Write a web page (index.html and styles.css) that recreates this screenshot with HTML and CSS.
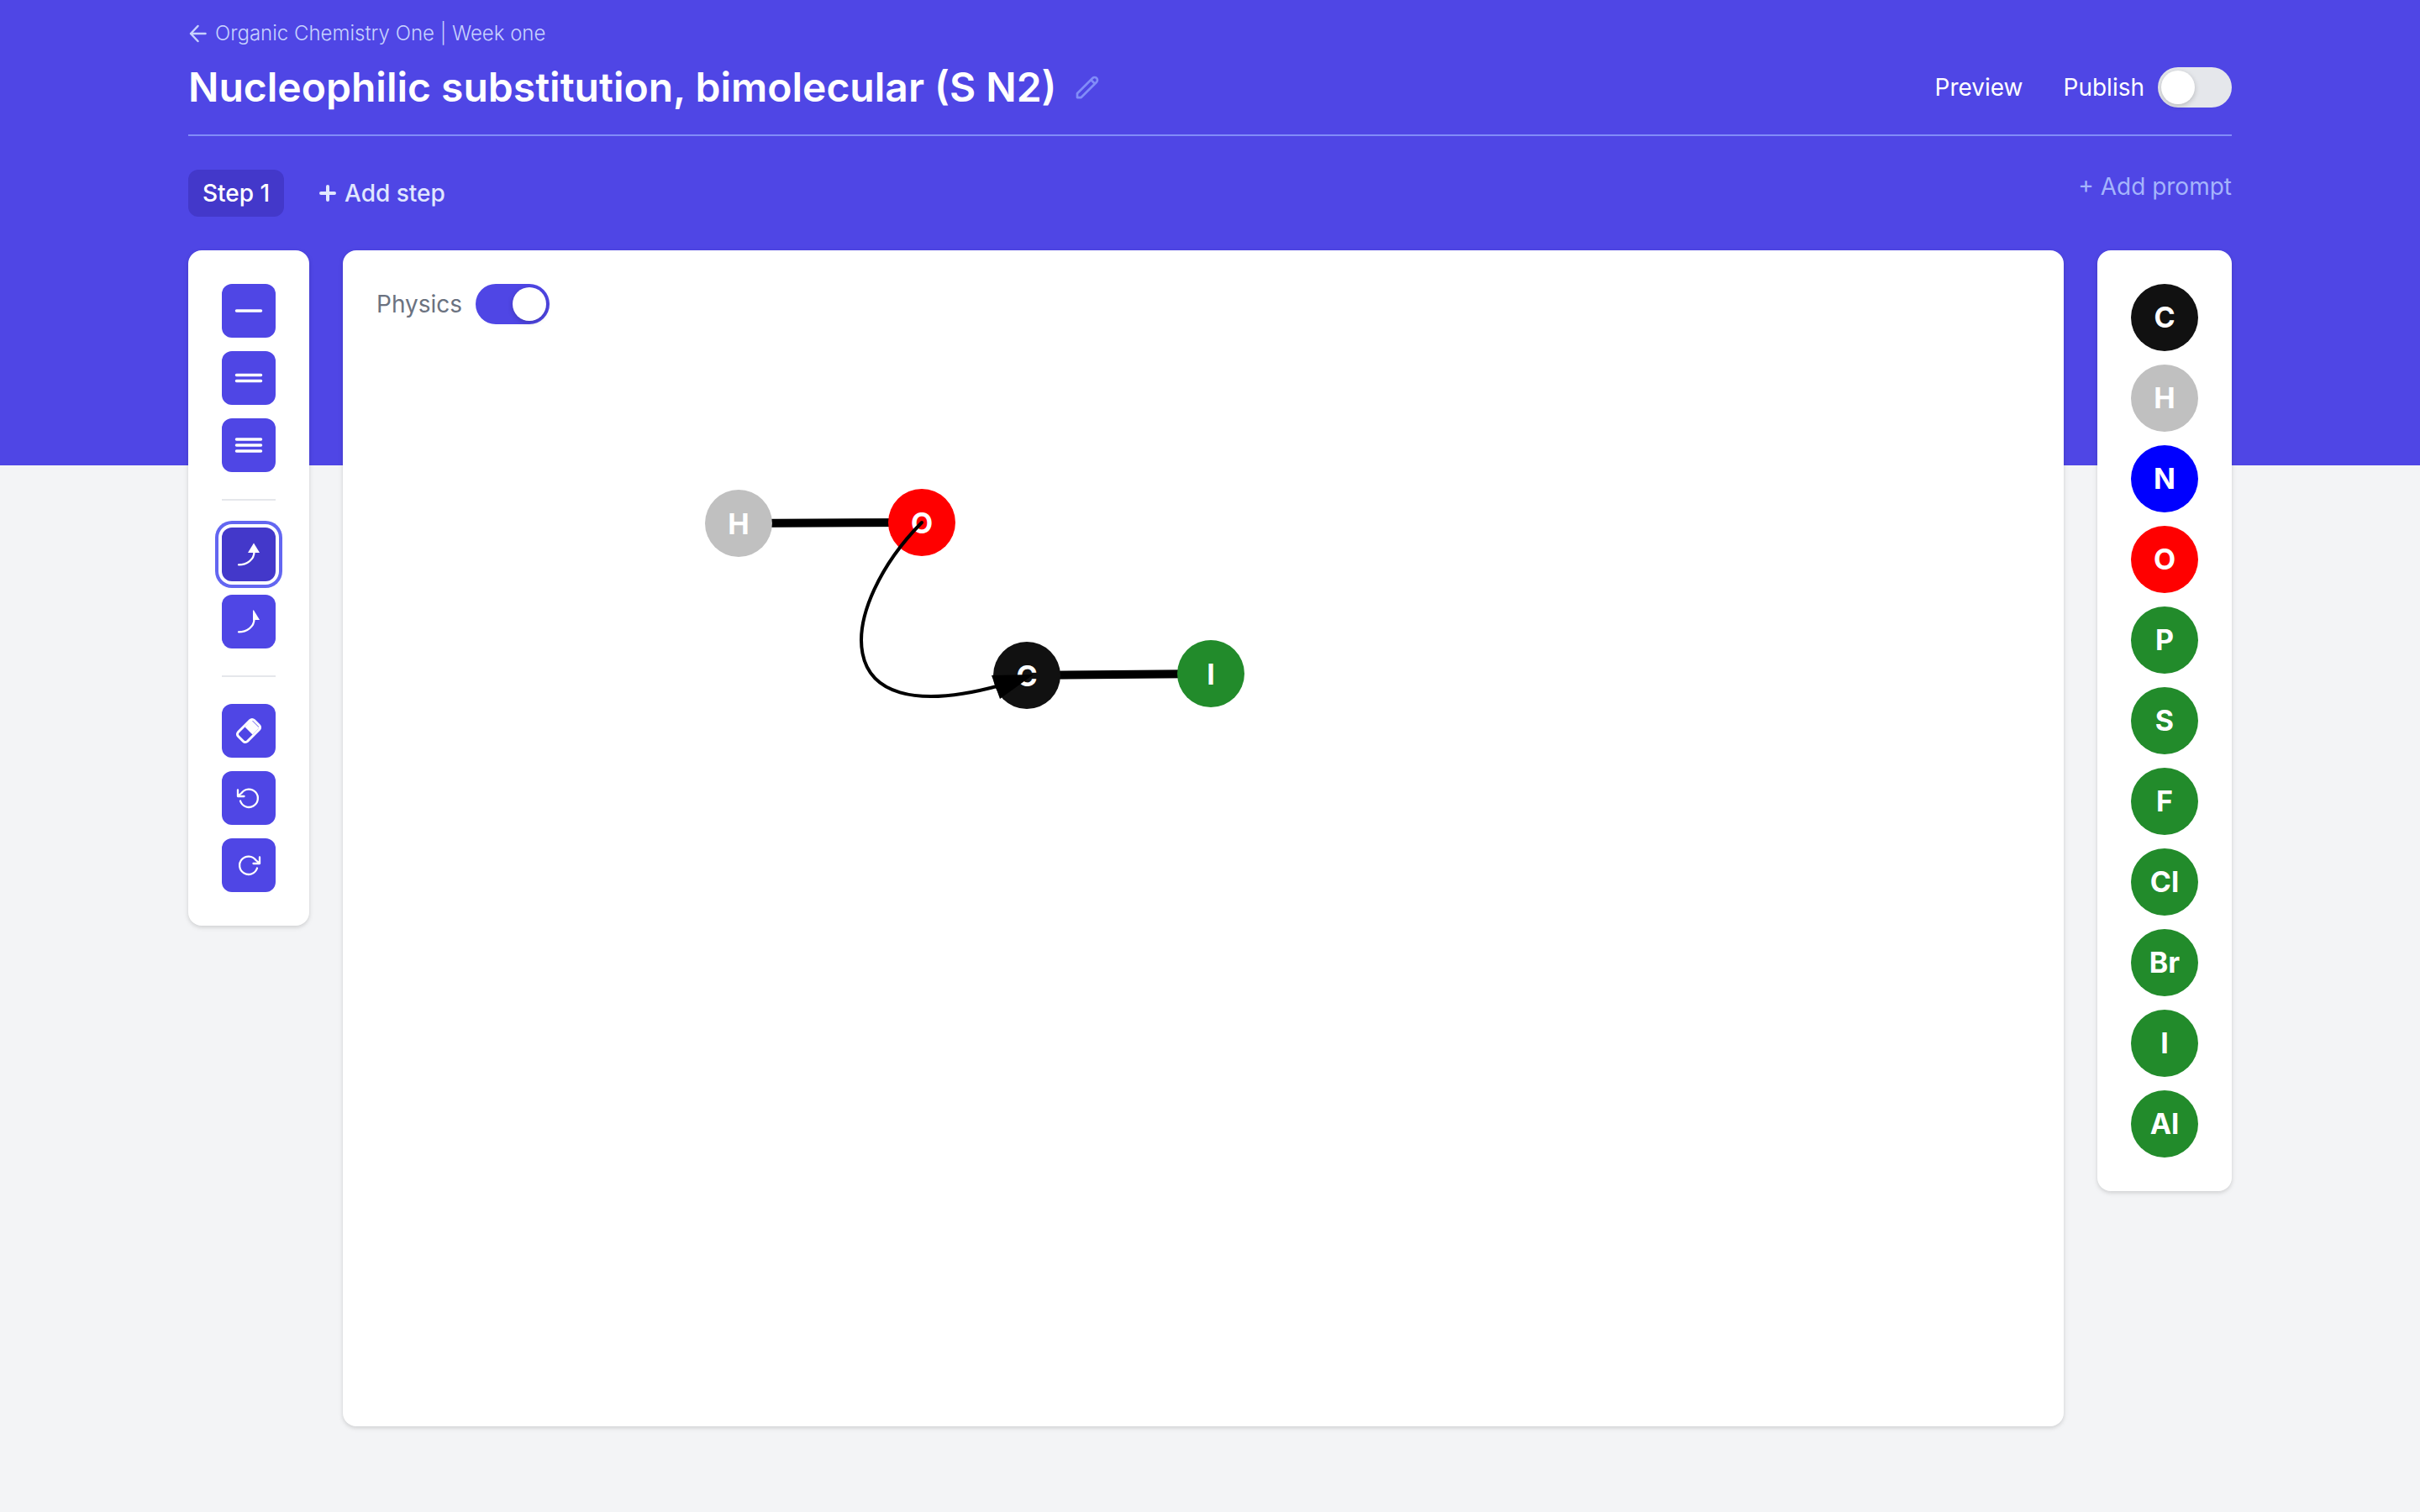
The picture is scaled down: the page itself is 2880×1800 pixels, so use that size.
FILE: index.html
```html
<!DOCTYPE html>
<html lang="en">
<head>
<meta charset="utf-8">
<title>Nucleophilic substitution, bimolecular (S N2)</title>
<link rel="stylesheet" href="styles.css">
</head>
<body>
<div class="page">
  <header class="header">
    <a class="breadcrumb" href="#">
      <svg class="breadcrumb-icon" viewBox="0 0 24 24" aria-hidden="true"><path d="M20.500 12H3M11.500 3L3 12l8.500 9"/></svg>
      <span>Organic Chemistry One | Week one</span>
    </a>
    <div class="title-row">
      <div class="title-group">
        <h1 class="title">Nucleophilic substitution, bimolecular (S N2)</h1>
        <button class="edit" type="button" aria-label="Edit title">
          <svg viewBox="0 0 24 24" aria-hidden="true"><path d="M15.232 5.232l3.536 3.536m-2.036-5.036a2.5 2.5 0 113.536 3.536L6.5 21.036H3v-3.572L16.732 3.732z"/></svg>
        </button>
      </div>
      <div class="actions">
        <a class="preview" href="#">Preview</a>
        <label class="toggle-field"><span>Publish</span><input class="toggle" type="checkbox" role="switch"></label>
      </div>
    </div>
    <div class="steps-row">
      <nav class="steps">
        <button class="step" type="button">Step 1</button>
        <button class="add-step" type="button">
          <svg class="plus" viewBox="0 0 24 24" aria-hidden="true"><path d="M12 4v16M4 12h16"/></svg>
          <span>Add step</span>
        </button>
      </nav>
      <button class="add-prompt" type="button">+ Add prompt</button>
    </div>
  </header>
  <main class="workspace">
    <aside class="panel tools">
      <button class="tool" type="button" aria-label="Single bond"><svg viewBox="0 0 64 64"><path class="bond" d="M17.500 32h29"/></svg></button>
      <button class="tool" type="button" aria-label="Double bond"><svg viewBox="0 0 64 64"><path class="bond" d="M17.500 28.500h29M17.500 35.500h29"/></svg></button>
      <button class="tool" type="button" aria-label="Triple bond"><svg viewBox="0 0 64 64"><path class="bond" d="M17.500 25h29M17.500 32h29M17.500 39h29"/></svg></button>
      <hr class="divider">
      <button class="tool tool-active" type="button" aria-label="Electron pair arrow"><svg viewBox="0 0 64 64"><path class="stroke" d="M20 44.300C30 44.300 38.500 38 38.500 29"/><path class="fill" d="M38 18.500l7 11.500H31z"/></svg></button>
      <button class="tool" type="button" aria-label="Single electron arrow"><svg viewBox="0 0 64 64"><path class="stroke" d="M20 44.300C30 44.300 38.500 38 38.500 29"/><path class="fill" d="M37 18.500h1l7 11.500h-8z"/></svg></button>
      <hr class="divider">
      <button class="tool" type="button" aria-label="Eraser"><svg viewBox="0 0 64 64"><path class="eraser" d="M33.500 19.500a3.500 3.500 0 0 1 5 0l6 6a3.500 3.500 0 0 1 0 5L30.500 44.500a3.500 3.500 0 0 1-5 0l-6-6a3.500 3.500 0 0 1 0-5z"/><path class="fill" d="M27.500 27.500L35 19l9.500 9.500-8 8z"/></svg></button>
      <button class="tool" type="button" aria-label="Undo"><svg viewBox="0 0 64 64"><path class="stroke" d="M22 35.500a10.700 10.700 0 1 0 1.500-9.500L19.500 29.500M19 22.500v7.500h7.500"/></svg></button>
      <button class="tool" type="button" aria-label="Redo"><svg viewBox="0 0 64 64"><path class="stroke" d="M42 35.500a10.700 10.700 0 1 1-1.500-9.500L44.500 29.500M45 22.500v7.500h-7.500"/></svg></button>
    </aside>
    <section class="panel canvas">
      <label class="toggle-field physics"><span>Physics</span><input class="toggle" type="checkbox" role="switch" checked></label>
      <svg class="molecule" viewBox="0 0 680 300" role="img" aria-label="Hydroxide attacking iodomethane">
        <path class="edge" d="M59 63L277 62M402 244L621 242"/>
        <circle class="atom-h" cx="59" cy="63" r="40"/>
        <circle class="atom-o" cx="277" cy="62" r="40"/>
        <circle class="atom-c" cx="402" cy="244" r="40"/>
        <circle class="atom-x" cx="621" cy="242" r="40"/>
        <text class="atom-label" x="59" y="76">H</text>
        <text class="atom-label" x="277" y="75">O</text>
        <text class="atom-label" x="402" y="257">C</text>
        <text class="atom-label" x="621" y="255">I</text>
        <path class="electron-path" d="M277 62C180 160 155 315 370 256"/>
        <path d="M410 243L360 244L370 272z"/>
      </svg>
    </section>
    <aside class="panel atoms">
      <button class="atom carbon" type="button">C</button>
      <button class="atom hydrogen" type="button">H</button>
      <button class="atom nitrogen" type="button">N</button>
      <button class="atom oxygen" type="button">O</button>
      <button class="atom" type="button">P</button>
      <button class="atom" type="button">S</button>
      <button class="atom" type="button">F</button>
      <button class="atom" type="button">Cl</button>
      <button class="atom" type="button">Br</button>
      <button class="atom" type="button">I</button>
      <button class="atom" type="button">Al</button>
    </aside>
  </main>
</div>
</body>
</html>
```
FILE: styles.css
```css
*, *::before, *::after { box-sizing: border-box; }

body {
  margin: 0;
  min-height: 100vh;
  background: linear-gradient(#4f46e5 554px, #f3f4f6 554px) no-repeat #f3f4f6;
  color: #fff;
  font: 400 28px/40px Inter, "Liberation Sans", sans-serif;
}

button {
  margin: 0;
  padding: 0;
  border: 0;
  background: none;
  color: inherit;
  font: inherit;
  cursor: pointer;
}

a { color: inherit; text-decoration: none; }
svg { display: block; }

.page {
  max-width: 2560px;
  margin: 0 auto;
  padding: 20px 64px 102px;
}

.breadcrumb {
  display: flex;
  align-items: center;
  gap: 8px;
  color: #c7d2fe;
  font-size: 24px;
  font-weight: 300;
}

.breadcrumb-icon {
  width: 24px;
  height: 24px;
  fill: none;
  stroke: currentColor;
  stroke-width: 2.500;
  stroke-linecap: round;
  stroke-linejoin: round;
}

.title-row {
  display: flex;
  justify-content: space-between;
  align-items: center;
  height: 102px;
  padding-bottom: 12px;
  border-bottom: 2px solid #818cf8;
}

.title-group, .actions, .steps, .toggle-field, .add-step { display: flex; align-items: center; }
.title-group { gap: 20px; }
.title { margin: 0; font-size: 48px; line-height: 64px; font-weight: 600; }
.edit svg {
  width: 32px;
  height: 32px;
  fill: none;
  stroke: #818cf8;
  stroke-width: 2;
  stroke-linejoin: round;
}
.actions { gap: 48px; }
.toggle-field { gap: 16px; }

.toggle {
  appearance: none;
  display: flex;
  width: 88px;
  height: 48px;
  margin: 0;
  padding: 4px;
  border-radius: 24px;
  background: #e5e7eb;
}
.toggle::before {
  content: "";
  width: 40px;
  height: 40px;
  border-radius: 50%;
  background: #fff;
  box-shadow: 0 2px 6px rgb(0 0 0 / 20%);
}
.toggle:checked { justify-content: flex-end; background: #4f46e5; }

.steps-row {
  display: flex;
  justify-content: space-between;
  align-items: flex-start;
  padding: 40px 0;
}
.steps { gap: 40px; }
.step { min-width: 114px; height: 56px; padding: 0 16px; border-radius: 12px; background: #4338ca; font-weight: 500; }
.add-step { gap: 8px; color: #e0e7ff; font-weight: 500; }
.plus {
  width: 24px;
  height: 24px;
  stroke: currentColor;
  stroke-width: 4;
  stroke-linecap: round;
}
.add-prompt { color: #a5b4fc; }

.workspace {
  display: grid;
  grid-template-columns: 144px minmax(0, 1fr) 160px;
  align-items: start;
  gap: 40px;
}

.panel {
  padding: 40px;
  border-radius: 16px;
  background: #fff;
  box-shadow: 0 2px 6px rgb(0 0 0 / 10%), 0 2px 4px rgb(0 0 0 / 6%);
}

.tools, .atoms { display: flex; flex-direction: column; gap: 16px; }
.tool { height: 64px; border-radius: 12px; background: #4f46e5; }
.tool-active { background: #4338ca; box-shadow: 0 0 0 4px #fff, 0 0 0 8px #6366f1; }
.divider { width: 100%; height: 2px; margin: 16px 0; border: 0; background: #e5e7eb; }

.bond, .stroke, .eraser { fill: none; stroke: #fff; stroke-width: 2.300; stroke-linecap: round; stroke-linejoin: round; }
.bond { stroke-width: 3.500; }
.eraser { stroke-width: 3; }
.fill { fill: #fff; }

.canvas { min-height: 1400px; color: #6b7280; }
.physics { width: max-content; }
.molecule { width: 680px; height: 300px; margin: 174px 0 0 372px; }
.edge { stroke: #000; stroke-width: 10; }
.electron-path { fill: none; stroke: #000; stroke-width: 4; stroke-linecap: round; }
.atom-label { fill: #fff; font: 700 34px Inter, "Liberation Sans", sans-serif; text-anchor: middle; }
.atom-h { fill: silver; }
.atom-o { fill: red; }
.atom-c { fill: #111; }
.atom-x { fill: #228b2b; }

.atom { height: 80px; border-radius: 50%; background: #228b2b; font-size: 34px; font-weight: 700; }
.carbon { background: #111; }
.hydrogen { background: silver; }
.nitrogen { background: blue; }
.oxygen { background: red; }
```
